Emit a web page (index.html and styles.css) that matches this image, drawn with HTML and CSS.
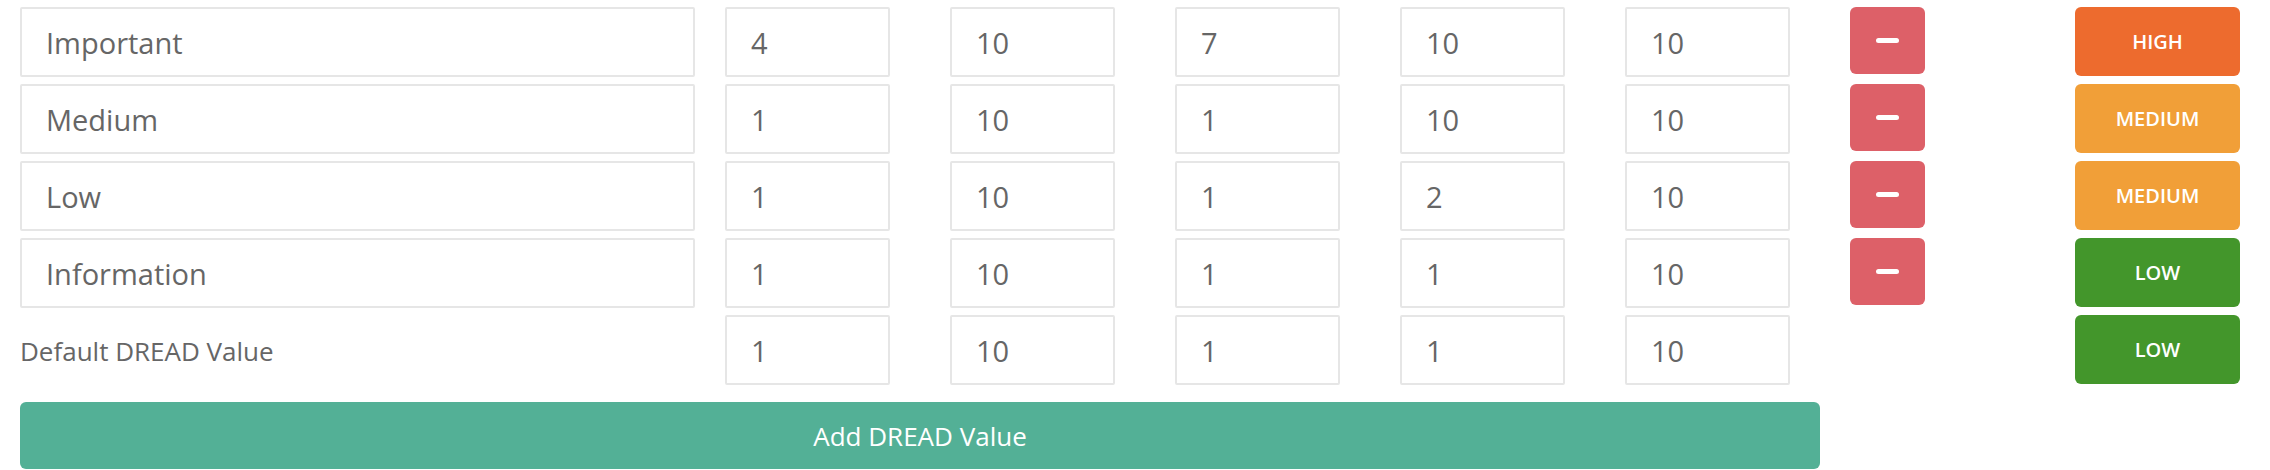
FILE: index.html
```html
<!DOCTYPE html>
<html lang="en">
<head>
    <meta charset="UTF-8">
    <meta name="viewport" content="width=device-width, initial-scale=1.0">
    <title>DREAD Values</title>
    <link rel="stylesheet" href="styles.css">
</head>
<body>
    <section class="dread">
        <div class="dread-row">
            <input class="field name" type="text" value="Important">
            <input class="field" type="text" value="4">
            <input class="field" type="text" value="10">
            <input class="field" type="text" value="7">
            <input class="field" type="text" value="10">
            <input class="field" type="text" value="10">
            <button class="btn-remove" title="Remove"><span class="minus"></span></button>
            <span class="badge high">HIGH</span>
        </div>
        <div class="dread-row">
            <input class="field name" type="text" value="Medium">
            <input class="field" type="text" value="1">
            <input class="field" type="text" value="10">
            <input class="field" type="text" value="1">
            <input class="field" type="text" value="10">
            <input class="field" type="text" value="10">
            <button class="btn-remove" title="Remove"><span class="minus"></span></button>
            <span class="badge medium">MEDIUM</span>
        </div>
        <div class="dread-row">
            <input class="field name" type="text" value="Low">
            <input class="field" type="text" value="1">
            <input class="field" type="text" value="10">
            <input class="field" type="text" value="1">
            <input class="field" type="text" value="2">
            <input class="field" type="text" value="10">
            <button class="btn-remove" title="Remove"><span class="minus"></span></button>
            <span class="badge medium">MEDIUM</span>
        </div>
        <div class="dread-row">
            <input class="field name" type="text" value="Information">
            <input class="field" type="text" value="1">
            <input class="field" type="text" value="10">
            <input class="field" type="text" value="1">
            <input class="field" type="text" value="1">
            <input class="field" type="text" value="10">
            <button class="btn-remove" title="Remove"><span class="minus"></span></button>
            <span class="badge low">LOW</span>
        </div>
        <div class="dread-row">
            <label class="default-label">Default DREAD Value</label>
            <input class="field" type="text" value="1">
            <input class="field" type="text" value="10">
            <input class="field" type="text" value="1">
            <input class="field" type="text" value="1">
            <input class="field" type="text" value="10">
            <span></span>
            <span class="badge low">LOW</span>
        </div>

        <button class="btn-add">Add DREAD Value</button>
    </section>
</body>
</html>
```

FILE: styles.css
```css
body {
    font-family: "Open Sans", "Liberation Sans", sans-serif;
    margin: 0;
    padding: 7px 0 0 20px;
    background-color: #fff;
    color: #666;
}
.dread {
    display: flex;
    flex-direction: column;
    gap: 7px;
}
.dread-row {
    display: grid;
    grid-template-columns: 705px repeat(6, 225px) 165px;
    height: 70px;
}
.field {
    box-sizing: border-box;
    width: 165px;
    height: 70px;
    margin: 0;
    padding: 0 22px 0 24px;
    border: 2px solid #e6e6e6;
    border-radius: 2px;
    font-family: inherit;
    font-size: 29px;
    color: #666;
    background: #fff;
    outline: none;
}
.field.name {
    width: 675px;
}
.default-label {
    align-self: center;
    font-size: 26px;
    padding-top: 2px;
}
.btn-remove {
    width: 75px;
    height: 67px;
    border: none;
    border-radius: 6px;
    background-color: #dd6068;
    display: flex;
    align-items: center;
    justify-content: center;
    padding: 0;
    cursor: pointer;
}
.minus {
    display: block;
    width: 23px;
    height: 5px;
    border-radius: 3px;
    background: #fff;
    margin-top: -1px;
}
.badge {
    height: 69px;
    border-radius: 6px;
    display: flex;
    align-items: center;
    justify-content: center;
    color: #fff;
    font-size: 20px;
    font-weight: 600;
}
.badge.high {
    background-color: #ed6b2e;
}
.badge.medium {
    background-color: #f19f38;
}
.badge.low {
    background-color: #43962b;
}
.btn-add {
    margin-top: 10px;
    width: 1800px;
    height: 67px;
    border: none;
    border-radius: 6px;
    background-color: #53b096;
    color: #fff;
    font-family: inherit;
    font-size: 26px;
    cursor: pointer;
}
```
